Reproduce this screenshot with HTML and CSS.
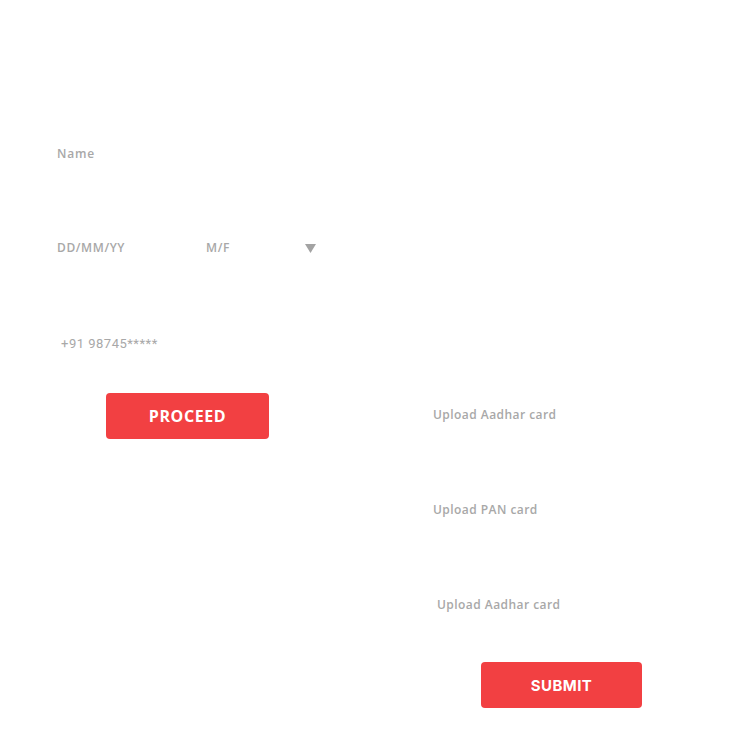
FILE: index.html
```html
<!DOCTYPE html>
<html>
<head>
<meta charset="utf-8">
<link rel="stylesheet" href="styles.css">
</head>
<body>
<div class="page">
  <div class="fields">
    <div class="field">Name</div>
    <div class="field row">
      <span class="dob">DD/MM/YY</span>
      <span class="gender">M/F</span>
      <svg class="caret" width="11" height="9" viewBox="0 0 11 9"><polygon points="0,0 11,0 5.5,9" fill="#a3a3a3"/></svg>
    </div>
    <div class="field phone">+91 98745*****</div>
  </div>
  <div class="lower">
    <div class="left">
      <button class="btn proceed">PROCEED</button>
    </div>
    <div class="right">
      <div class="upload">Upload Aadhar card</div>
      <div class="upload">Upload PAN card</div>
      <div class="upload shift">Upload Aadhar card</div>
      <button class="btn submit">SUBMIT</button>
    </div>
  </div>
</div>
</body>
</html>
```
FILE: styles.css
```css
html, body { margin: 0; padding: 0; background: #fff; }
body { font-family: "Open Sans", "Noto Sans", sans-serif; }
.page { width: 748px; height: 748px; padding-top: 145px; box-sizing: border-box; }
.fields { padding-left: 57px; display: flex; flex-direction: column; gap: 76px; }
.field { height: 18px; line-height: 18px; font-size: 12px; font-weight: 600; color: #a8a8a8; letter-spacing: 0.8px; }
.row { display: flex; align-items: center; }
.dob { width: 149px; letter-spacing: 0.6px; }
.gender { width: 99px; letter-spacing: 0.6px; }
.caret { display: block; margin-top: 0; }
.phone { padding-left: 4px; font-family: Roboto, sans-serif; font-weight: 400; font-size: 13px; letter-spacing: 0.5px; margin-top: 2px; }
.lower { display: flex; margin-top: 40px; }
.left { width: 433px; padding-left: 106px; box-sizing: border-box; }
.right { display: flex; flex-direction: column; padding-top: 13px; }
.upload { height: 18px; line-height: 18px; font-size: 12px; font-weight: 600; color: #a8a8a8; margin-bottom: 77px; letter-spacing: 0.45px; }
.upload.shift { padding-left: 4px; margin-bottom: 48px; }
.btn { border: none; border-radius: 4px; background: #f24042; color: #fff; font-weight: 700; cursor: pointer; padding: 0; }
.proceed { width: 163px; height: 46px; font-family: "Open Sans", sans-serif; font-size: 16px; letter-spacing: 0.6px; }
.submit { margin-left: 48px; width: 161px; height: 46px; font-family: Inter, sans-serif; font-size: 15px; letter-spacing: 0.4px; }
```
